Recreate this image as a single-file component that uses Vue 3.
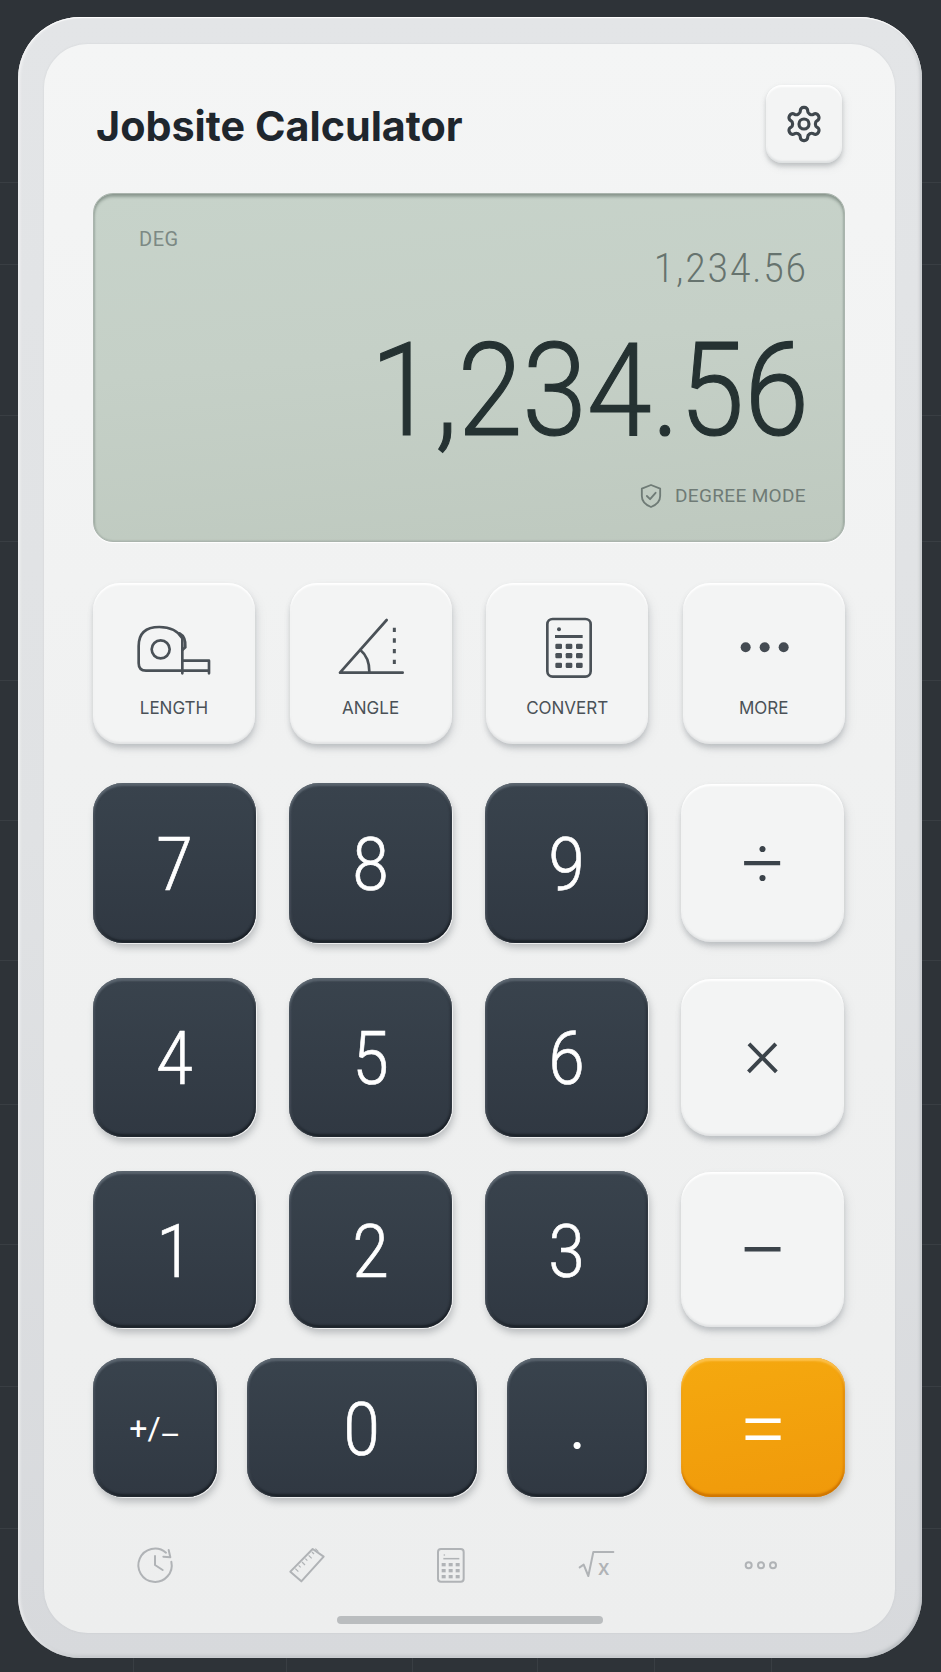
<script setup>
const rows = [
  [{ t: '7' }, { t: '8' }, { t: '9' }, { t: '÷', op: 'div' }],
  [{ t: '4' }, { t: '5' }, { t: '6' }, { t: '×', op: 'mul' }],
  [{ t: '1' }, { t: '2' }, { t: '3' }, { t: '−', op: 'sub' }],
]
const keys = rows.flat()
const calcKeys = []
for (const y of [221, 249, 278]) for (const x of [256, 287, 318]) calcKeys.push({ x, y })
const tabCalc = []
for (const y of [1, 2, 3]) for (const x of [1, 2, 3]) tabCalc.push({ x: 1327 + (x - 1) * 21, y: 669 + (y - 1) * 18 })
const ticks = [0, 1, 2, 3, 4, 5, 6]
</script>

<template>
  <div class="page">
    <div class="device">
      <div class="screen">
        <header class="head">
          <h1 class="title">Jobsite Calculator</h1>
          <button class="gear">
            <svg viewBox="0 0 24 24" width="40" height="40" fill="none" stroke="#3f474d" stroke-width="1.9" stroke-linecap="round" stroke-linejoin="round">
              <path d="M12.22 2h-.44a2 2 0 0 0-2 2v.18a2 2 0 0 1-1 1.73l-.43.25a2 2 0 0 1-2 0l-.15-.08a2 2 0 0 0-2.73.73l-.22.38a2 2 0 0 0 .73 2.73l.15.1a2 2 0 0 1 1 1.72v.51a2 2 0 0 1-1 1.74l-.15.09a2 2 0 0 0-.73 2.73l.22.38a2 2 0 0 0 2.73.73l.15-.08a2 2 0 0 1 2 0l.43.25a2 2 0 0 1 1 1.73V20a2 2 0 0 0 2 2h.44a2 2 0 0 0 2-2v-.18a2 2 0 0 1 1-1.73l.43-.25a2 2 0 0 1 2 0l.15.08a2 2 0 0 0 2.73-.73l.22-.39a2 2 0 0 0-.73-2.73l-.15-.08a2 2 0 0 1-1-1.74v-.5a2 2 0 0 1 1-1.74l.15-.09a2 2 0 0 0 .73-2.73l-.22-.38a2 2 0 0 0-2.73-.73l-.15.08a2 2 0 0 1-2 0l-.43-.25a2 2 0 0 1-1-1.73V4a2 2 0 0 0-2-2z" />
              <circle cx="12" cy="12" r="3" />
            </svg>
          </button>
        </header>

        <section class="lcd">
          <div class="deg">DEG</div>
          <div class="prev">1,234.56</div>
          <div class="value">1,234.56</div>
          <div class="mode">
            <svg viewBox="0 0 24 28" width="22" height="26" fill="none" stroke="#6f7b76" stroke-width="2" stroke-linejoin="round" stroke-linecap="round">
              <path d="M12 2 L22 6 V14 C22 20 17 24 12 26 C7 24 2 20 2 14 V6 Z" />
              <path d="M7.5 14 L11 17.5 L17 10.5" />
            </svg>
            <span>DEGREE MODE</span>
          </div>
        </section>

        <section class="tools">
          <button class="tool">
            <svg class="ticon" viewBox="136 141 288 180" fill="none" stroke="#4a5157" stroke-width="8" stroke-linecap="round" stroke-linejoin="round">
              <path d="M305 302 H196 Q174 302 174 280 V228 Q174 171 236 171 Q285 171 305 205 Z" />
              <circle cx="240" cy="238" r="27" />
              <path d="M297 190 Q316 200 314 232 L305 240" />
              <path d="M305 272 H385 V310 M305 302 H384 M305 302 V310" />
            </svg>
            <span>LENGTH</span>
          </button>
          <button class="tool">
            <svg class="ticon" viewBox="726 141 288 180" fill="none" stroke="#4a5157" stroke-width="8" stroke-linecap="round" stroke-linejoin="round">
              <path d="M917 150 L777 308 H965" />
              <path d="M838 240 Q865 262 865 305" />
              <path d="M940 173 V285" stroke-dasharray="13 19" stroke-linecap="butt" stroke-width="9" />
            </svg>
            <span>ANGLE</span>
          </button>
          <button class="tool">
            <svg class="ticon" viewBox="147 141 288 180" fill="none" stroke="#4a5157" stroke-width="8">
              <rect x="232" y="147" width="130" height="173" rx="16" />
              <circle cx="267" cy="178" r="6" fill="#4a5157" stroke="none" />
              <rect x="255" y="195" width="83" height="9" fill="#4a5157" stroke="none" />
              <rect v-for="(k, i) in calcKeys" :key="i" :x="k.x" :y="k.y" width="20" height="16" rx="4" fill="#4a5157" stroke="none" />
            </svg>
            <span>CONVERT</span>
          </button>
          <button class="tool">
            <svg class="ticon" viewBox="736 141 288 180" fill="#444b52">
              <circle cx="825" cy="232" r="15" />
              <circle cx="882" cy="232" r="15" />
              <circle cx="939" cy="232" r="15" />
            </svg>
            <span>MORE</span>
          </button>
        </section>

        <section class="keys">
          <button v-for="k in keys" :key="k.t" class="key" :class="k.op ? ['op', k.op] : 'dark'"><span class="face">{{ k.t }}</span></button>
        </section>

        <section class="lastrow">
          <button class="key dark w-sign"><span class="sign">+/<span class="dash">–</span></span></button>
          <button class="key dark w-zero"><span class="face">0</span></button>
          <button class="key dark w-dot"><span class="dot">.</span></button>
          <button class="key eq"><span class="eqface">=</span></button>
        </section>

        <nav class="tabs">
          <svg viewBox="393 603 144 144" width="48" height="48" fill="none" stroke="#b0b3b6" stroke-width="6" stroke-linecap="round" stroke-linejoin="round">
            <path d="M498 638 A50 50 0 1 0 514 665" />
            <path d="M465 648 V675 L488 690" />
            <path d="M506 630 L511 652 L490 650" />
          </svg>
          <svg viewBox="849 603 144 144" width="48" height="48" fill="none" stroke="#b0b3b6" stroke-width="6" stroke-linejoin="round">
            <path d="M871 695 L938 627 L971 650 L904 724 Z" />
            <path v-for="i in ticks" :key="i" :d="`M${886 + i * 10} ${686 - i * 10} l${i % 2 ? 6 : 9} ${i % 2 ? 6 : 9}`" stroke-width="3.5" />
          </svg>
          <svg viewBox="1283 603 144 144" width="48" height="48" fill="none" stroke="#b0b3b6" stroke-width="6">
            <rect x="1316" y="627" width="77" height="98" rx="9" />
            <path d="M1332 656 H1380" stroke-width="4.5" />
            <circle cx="1335" cy="645" r="2.5" fill="#b0b3b6" stroke="none" />
            <rect v-for="(k, i) in tabCalc" :key="i" :x="k.x" :y="k.y" width="12" height="10" fill="#b0b3b6" stroke="none" />
          </svg>
          <svg viewBox="393 603 144 144" width="48" height="48" fill="none" stroke="#b0b3b6" stroke-width="6" stroke-linejoin="round" stroke-linecap="round">
            <path d="M416 682 L428 674 L442 708 L457 636 H517" />
            <text x="470" y="704" class="sqx" fill="#b0b3b6" stroke="none">x</text>
          </svg>
          <svg viewBox="888 603 144 144" width="48" height="48" fill="none" stroke="#b0b3b6" stroke-width="6">
            <circle cx="923" cy="676" r="9" />
            <circle cx="960" cy="676" r="9" />
            <circle cx="996" cy="676" r="9" />
          </svg>
        </nav>

        <div class="home"></div>
      </div>
    </div>
  </div>
</template>

<style>
html, body { margin: 0; padding: 0; background: #2e3338; }
</style>

<style scoped>
.page {
  --gl: linear-gradient(#393e43 0 0);
  width: 941px;
  height: 1672px;
  box-sizing: border-box;
  padding: 17px 19px 14px 18px;
  overflow: hidden;
  background-color: #2e3338;
  background-repeat: no-repeat;
  background-image:
    var(--gl), var(--gl), var(--gl), var(--gl), var(--gl), var(--gl), var(--gl), var(--gl), var(--gl), var(--gl), var(--gl),
    var(--gl), var(--gl), var(--gl), var(--gl), var(--gl), var(--gl);
  background-size:
    100% 1px, 100% 1px, 100% 1px, 100% 1px, 100% 1px, 100% 1px, 100% 1px, 100% 1px, 100% 1px, 100% 1px, 100% 1px,
    1px 14px, 1px 14px, 1px 14px, 1px 14px, 1px 14px, 1px 14px;
  background-position:
    0 182px, 0 264px, 0 415px, 0 541px, 0 680px, 0 820px, 0 960px, 0 1104px, 0 1244px, 0 1386px, 0 1528px,
    133px 100%, 286px 100%, 412px 100%, 537px 100%, 654px 100%, 771px 100%;
  font-family: Inter, "Liberation Sans", sans-serif;
}
.device {
  width: 904px;
  height: 1641px;
  box-sizing: border-box;
  padding: 27px 27px 25px 26px;
  border-radius: 62px;
  background: linear-gradient(180deg, #e3e5e7 0%, #e0e2e4 50%, #d7d9dc 100%);
  box-shadow: inset 0 1px 1px #fff, inset 2px 0 3px rgba(255,255,255,.5), inset -2px -2px 3px rgba(160,165,170,.5);
}
.screen {
  width: 851px;
  height: 1589px;
  box-sizing: border-box;
  padding: 41px 50px 0 49px;
  border-radius: 44px;
  background: linear-gradient(180deg, #f4f5f5 0%, #f0f1f1 45%, #edeeee 100%);
  box-shadow: 0 0 2px rgba(150,155,160,.25);
}
button {
  border: 0;
  padding: 0;
  margin: 0;
  font: inherit;
  cursor: pointer;
}
.head {
  display: flex;
  align-items: center;
  justify-content: space-between;
  height: 78px;
  padding: 0 3px 0 3px;
}
.title {
  margin: 0;
  font-size: 41.3px;
  line-height: 46px;
  font-weight: 700;
  color: #1e262d;
  letter-spacing: 0;
  position: relative;
  top: 2px;
}
.gear {
  width: 76px;
  height: 78px;
  border-radius: 16px;
  display: flex;
  align-items: center;
  justify-content: center;
  background: #f3f4f4;
  box-shadow: 0 3px 4px rgba(120,125,130,.35), 2px 4px 8px rgba(130,135,140,.15), inset 0 2px 2px #fff, inset 0 -2px 2px rgba(190,194,198,.4);
}
.lcd {
  margin-top: 30px;
  height: 349px;
  box-sizing: border-box;
  padding: 35px 38px 0 45px;
  display: flex;
  flex-direction: column;
  border-radius: 20px;
  border: 1px solid #aab4ad;
  background: linear-gradient(175deg, #c7d3ca 0%, #c5d0c7 45%, #bec9bf 100%);
  box-shadow: inset 0 3px 3px rgba(70,85,78,.4), inset 0 0 2px rgba(70,85,78,.35), 0 1px 1px #fff;
}
.deg {
  line-height: 20px;
  font-size: 20px;
  font-family: Roboto, sans-serif;
  letter-spacing: .5px;
  color: #7c8984;
}
.prev {
  margin: -3px -2px 0 0;
  line-height: 44px;
  font-size: 41px;
  font-weight: 300;
  font-family: Roboto, sans-serif;
  letter-spacing: 2.6px;
  color: #66736e;
  text-align: right;
  transform: scaleX(.88);
  transform-origin: right;
}
.value {
  margin: 36px -3px 0 0;
  line-height: 130px;
  font-size: 129px;
  font-weight: 300;
  -webkit-text-stroke: 1.2px #253232;
  font-family: Roboto, sans-serif;
  color: #253232;
  text-align: right;
  white-space: nowrap;
  transform: scaleX(.904);
  transform-origin: right;
}
.mode {
  margin-top: 30px;
  height: 20px;
  display: flex;
  align-items: center;
  justify-content: flex-end;
  gap: 13px;
  color: #6f7b76;
  font-family: Roboto, sans-serif;
  font-size: 19px;
  letter-spacing: .35px;
}
.mode span {
  line-height: 20px;
}
.tools {
  margin-top: 41px;
  display: grid;
  grid-template-columns: repeat(4, 162px);
  column-gap: 34.6px;
}
.tool {
  height: 161px;
  box-sizing: border-box;
  padding-top: 34px;
  display: flex;
  flex-direction: column;
  align-items: center;
  gap: 20px;
  border-radius: 27px;
  background: #f3f4f4;
  color: #4a5157;
  font-size: 17px;
  line-height: 22px;
  box-shadow: 0 4px 5px rgba(130,135,140,.35), 3px 5px 10px rgba(130,135,140,.15), inset 0 2px 2px #fff, inset 0 -2px 2px rgba(200,203,206,.4);
}
.ticon {
  width: 96px;
  height: 60px;
  overflow: visible;
}
.keys {
  margin-top: 39px;
  display: grid;
  grid-template-columns: 163px 163px 163px 163px;
  grid-template-rows: 160px 159px 157px;
  column-gap: 33px;
  row-gap: 34.5px;
}
.key {
  display: flex;
  align-items: center;
  justify-content: center;
  border-radius: 30px;
}
.dark {
  color: #fff;
  background: linear-gradient(180deg, #39434d 0%, #343d47 55%, #303842 100%);
  box-shadow: 1px 1px 0 rgba(255,255,255,.7), 2px 5px 7px rgba(90,95,100,.35), inset 0 3px 2px rgba(112,122,132,.6), inset 2px 0 2px rgba(90,100,110,.45), inset -2px 0 2px rgba(28,34,40,.45), inset 0 -3px 2px rgba(20,26,32,.7);
}
.op {
  margin: 1px 0;
  color: #3b434a;
  background: #f3f4f4;
  box-shadow: 0 4px 5px rgba(130,135,140,.35), 3px 5px 10px rgba(130,135,140,.15), inset 0 2px 2px #fff, inset 0 -2px 2px rgba(200,203,206,.4);
}
.face {
  display: block;
  font-family: Roboto, sans-serif;
  font-weight: 300;
  font-size: 74px;
  line-height: 74px;
  -webkit-text-stroke: .7px #fff;
  transform: translateY(2px) scaleX(.88);
}
.op .face {
  -webkit-text-stroke: 0;
  transform: none;
}
.op.div .face { font-size: 74px; transform: translateY(1px); }
.op.mul .face { font-size: 72px; transform: translateY(-4px); }
.op.sub .face { font-size: 88px; transform: translateY(1px); }
.lastrow {
  margin-top: 30px;
  height: 139px;
  display: flex;
}
.w-sign { width: 124px; }
.w-zero { width: 230px; margin-left: 30px; }
.w-dot { width: 140px; margin-left: 30px; }
.eq {
  width: 164px;
  margin-left: 34px;
  border-radius: 30px;
  color: #fff;
  background: linear-gradient(170deg, #f5a90f 0%, #f0990a 100%);
  box-shadow: 2px 5px 7px rgba(110,105,95,.35), inset 0 3px 2px rgba(255,200,90,.8), inset 0 -3px 2px rgba(205,115,0,.9), inset -2px 0 2px rgba(215,125,0,.6);
}
.sign {
  font-family: Roboto, sans-serif;
  font-size: 32px;
  line-height: 40px;
  font-weight: 400;
}
.dash {
  position: relative;
  top: 7px;
  margin-left: -1px;
}
.dot {
  font-family: Lato, sans-serif;
  font-size: 56px;
  line-height: 56px;
}
.eqface {
  font-family: Roboto, sans-serif;
  font-size: 86px;
  line-height: 86px;
  font-weight: 300;
}
.tabs {
  margin-top: 44px;
  height: 48px;
  padding-left: 38px;
  display: grid;
  grid-template-columns: 152px 144px 145px 165px 48px;
}
.sqx {
  font-family: Inter, sans-serif;
  font-size: 64px;
  font-weight: 500;
}
.home {
  width: 266px;
  height: 8px;
  margin: 27px 0 0 244px;
  border-radius: 4px;
  background: #babdbf;
}
</style>
